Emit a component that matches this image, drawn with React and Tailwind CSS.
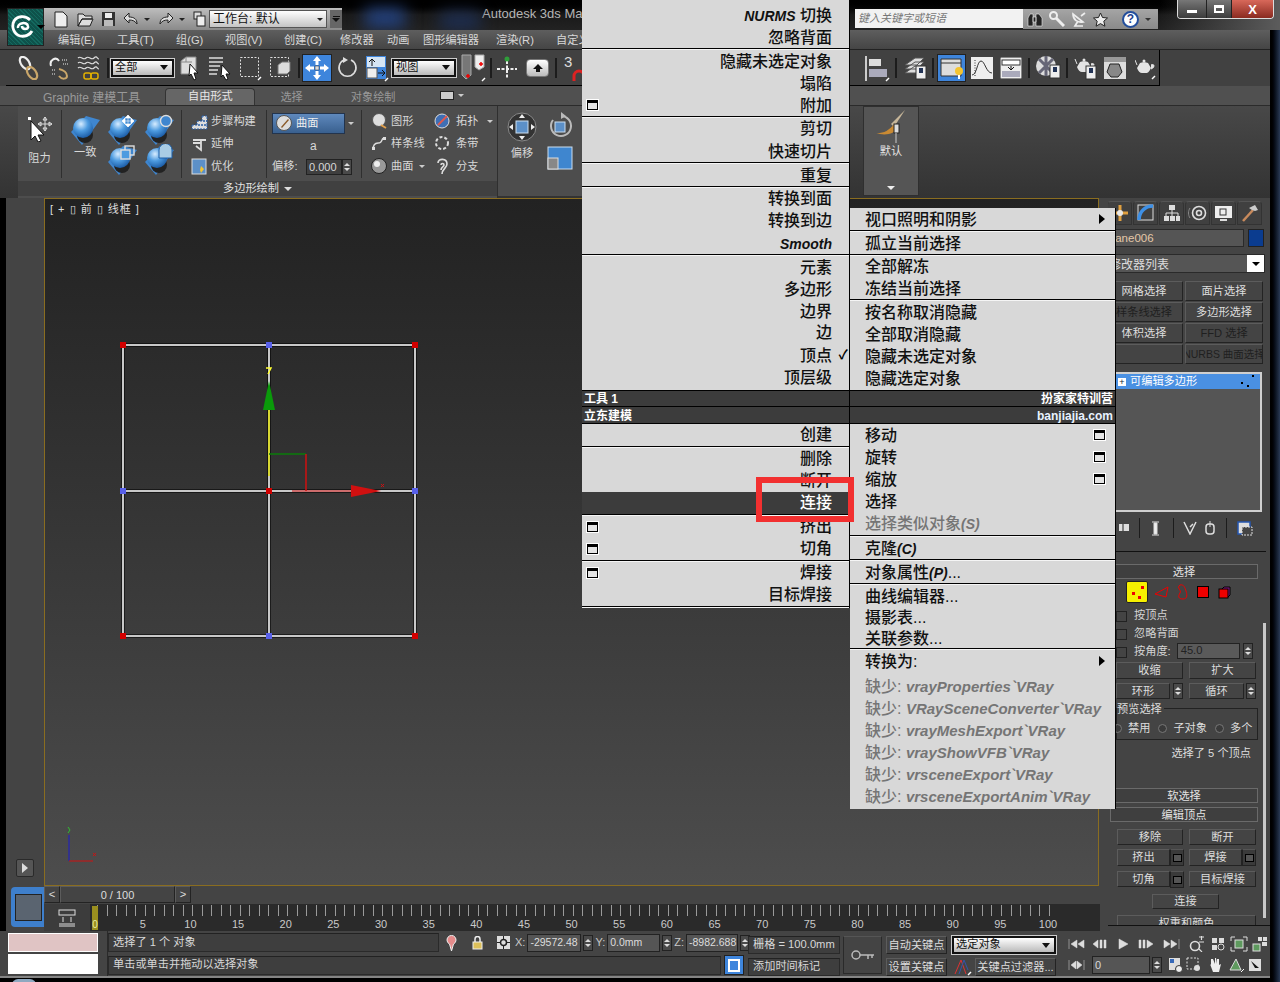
import React from "react";

const Svg = ({ w, h, className = "", children }) => (
  <svg width={w} height={h} viewBox={`0 0 ${w} ${h}`} className={`shrink-0 ${className}`} fill="none">
    {children}
  </svg>
);

/* ---------- toolbar icons ---------- */
const Chain = () => (
  <Svg w={21} h={24}>
    <ellipse cx="7" cy="7" rx="4" ry="7" transform="rotate(-35 7 7)" stroke="#eee" strokeWidth="2.2" />
    <ellipse cx="14" cy="17" rx="4" ry="7" transform="rotate(-35 14 17)" stroke="#c9a66a" strokeWidth="2.2" />
  </Svg>
);
const Unlink = () => (
  <Svg w={22} h={24}>
    <path d="M3 10C1 4 8 0 11 5" stroke="#eee" strokeWidth="2" />
    <path d="M11 13c5 1 8 4 8 7s-5 4-8 0" stroke="#c9a66a" strokeWidth="2" />
    <path d="M14 4h5M15 8h5M4 14h3M4 18h3" stroke="#999" strokeWidth="2" strokeDasharray="1 1" />
  </Svg>
);
const Waves = () => (
  <Svg w={23} h={26}>
    <path d="M1 3c3-3 5 3 8 0s5 3 8 0 3 1 5 1M1 8c3-3 5 3 8 0s5 3 8 0 3 1 5 1M1 13c3-3 5 3 8 0s5 3 8 0 3 1 5 1" stroke="#ddd" strokeWidth="1.2" />
    <rect x="7" y="18" width="7" height="6" rx="2" stroke="#e2b100" strokeWidth="1.5" />
    <rect x="14" y="18" width="7" height="6" rx="2" stroke="#e2b100" strokeWidth="1.5" />
  </Svg>
);
const SelectObj = () => (
  <Svg w={19} h={26}>
    <path d="M1 6l5-4h10v14l-4 3H1z" fill="#ddd" stroke="#888" />
    <path d="M6 2v5H1M6 7h6" stroke="#888" />
    <path d="M10 9l8 9-4 0 2 6-2 1-3-6-2 2z" fill="#fff" stroke="#111" />
  </Svg>
);
const SelectName = () => (
  <Svg w={23} h={26}>
    <path d="M1 3h14M1 7h14M1 11h11M1 15h9M1 19h8" stroke="#ddd" strokeWidth="1.3" />
    <path d="M14 10l8 9-4 0 2 5-2 1-3-5-2 2z" fill="#fff" stroke="#111" />
  </Svg>
);
const Rect = () => (
  <Svg w={23} h={26}>
    <rect x="1.5" y="2.5" width="18" height="19" stroke="#ddd" strokeDasharray="2 1.5" />
    <path d="M19 25l3-3" stroke="#fff" strokeWidth="1.5" />
  </Svg>
);
const WindowSel = () => (
  <Svg w={23} h={26}>
    <rect x="1.5" y="2.5" width="18" height="19" stroke="#ddd" strokeDasharray="2 1.5" />
    <path d="M9 10l4-3h8v9l-3 3H9z" fill="#ddd" stroke="#777" />
  </Svg>
);
const MoveBtn = () => (
  <div className="w-[30px] h-[28px] bg-[#3e85dc] border border-[#222] flex items-center justify-center">
    <Svg w={26} h={26}>
      <path d="M13 1l4 5h-2.500v4h-3V6H9zM13 25l4-5h-2.500v-4h-3v4H9zM1 13l5-4v2.500h4v3H6V17zM25 13l-5-4v2.500h-4v3h4V17z" fill="#fff" />
      <rect x="11" y="11" width="4" height="4" fill="#ddd" stroke="#234" strokeWidth=".5" />
    </Svg>
  </div>
);
const Rotate = () => (
  <Svg w={21} h={24}>
    <path d="M7 4a8.500 8.500 0 1 0 7 0" stroke="#ddd" strokeWidth="1.6" />
    <path d="M6 1l5 3-5 3z" fill="#ddd" />
  </Svg>
);
const Scale = () => (
  <Svg w={24} h={28}>
    <rect x="1" y="2" width="20" height="23" fill="#3e85dc" />
    <rect x="2" y="14" width="10" height="10" fill="#eee" stroke="#555" />
    <rect x="2" y="3" width="18" height="10" fill="#d5e5f5" />
    <path d="M7 12V5M4 8l3-3 3 3M13 19h7M17 16l3 3-3 3" stroke="#111" />
    <path d="M20 27l3-3" stroke="#fff" strokeWidth="1.5" />
  </Svg>
);
const Mirror = () => (
  <Svg w={25} h={28}>
    <path d="M1 1h9v20l-5 4-4-4z" fill="#777" stroke="#aaa" />
    <path d="M14 1h9v12l-5 3-4-3z" fill="#eee" stroke="#aaa" />
    <path d="M5 22h4M7 20v4M18 10h4M20 8v4" stroke="#e00" strokeWidth="1.5" />
    <path d="M21 27l3-3" stroke="#fff" strokeWidth="1.5" />
  </Svg>
);
const Pivot = () => (
  <Svg w={22} h={24}>
    <path d="M11 5v18M1 13h20" stroke="#eee" strokeWidth="2" strokeDasharray="3 1.500" />
    <circle cx="11" cy="3" r="2.500" fill="#2f9e3a" />
  </Svg>
);
const UpBtn = () => (
  <div className="w-[23px] h-[18px] rounded-sm bg-linear-to-b from-white to-[#bbb] border border-[#777] flex items-center justify-center">
    <Svg w={12} h={10}>
      <path d="M6 1l5 5H8v3H4V6H1z" fill="#111" />
    </Svg>
  </div>
);
const Snap = () => (
  <div className="w-[21px] h-[28px] relative text-[#ddd] text-[15px] leading-[16px]">
    3
    <Svg w={14} h={12} className="absolute left-[8px] top-[15px]">
      <path d="M2 12V7a5 5 0 0 1 10 0v5" stroke="#d22" strokeWidth="3" />
    </Svg>
  </div>
);
const Align = () => (
  <Svg w={25} h={28}>
    <path d="M1 2v25" stroke="#ccc" strokeWidth="2" />
    <rect x="4" y="5" width="12" height="7" fill="#ddd" />
    <rect x="4" y="15" width="18" height="8" fill="#aab" />
    <path d="M21 27l3-3" stroke="#fff" strokeWidth="1.5" />
  </Svg>
);
const Layers = () => (
  <Svg w={23} h={24}>
    <path d="M1 9l10-7h9l-7 7zM1 13l10-7h9l-7 7zM1 17l10-7h9l-7 7z" fill="#ddd" stroke="#555" />
    <rect x="12" y="10" width="10" height="13" fill="#eee" stroke="#333" />
    <rect x="15" y="12" width="4" height="5" fill="#235" />
  </Svg>
);
const SceneBtn = () => (
  <div className="w-[29px] h-[28px] bg-[#3e85dc] border border-[#222] flex items-center justify-center">
    <Svg w={25} h={24}>
      <path d="M2 3h20v17H2z" fill="#ddd" stroke="#333" />
      <path d="M2 7h20" stroke="#333" />
      <circle cx="20" cy="15" r="4" fill="#f4c430" />
      <path d="M20 19v4" stroke="#fff" strokeWidth="2" />
    </Svg>
  </div>
);
const CurveEd = () => (
  <Svg w={22} h={22}>
    <rect width="22" height="22" fill="#eee" />
    <path d="M1 18c5 0 5-14 9-14s5 12 11 12" stroke="#333" />
    <path d="M4 3v16" stroke="#333" strokeDasharray="1 1.500" />
  </Svg>
);
const Schema = () => (
  <Svg w={22} h={22}>
    <rect width="22" height="22" fill="#eee" stroke="#222" />
    <rect x="2" y="3" width="18" height="5" fill="#fff" stroke="#333" />
    <rect x="2" y="14" width="18" height="6" fill="#aab" />
    <path d="M11 9v4M8 10l3 3 3-3" stroke="#111" />
  </Svg>
);
const Material = () => (
  <Svg w={25} h={26}>
    <circle cx="10" cy="11" r="10" fill="#ddd" />
    <path d="M3 4l7 7-7 7M10 1v20M17 4l-7 7 7 7" stroke="#667" strokeWidth="3" />
    <rect x="14" y="10" width="10" height="13" fill="#eee" stroke="#333" />
    <rect x="17" y="12" width="4" height="5" fill="#235" />
  </Svg>
);
const Pot = ({ x = 0, y = 0 }) => (
  <g transform={`translate(${x} ${y})`} fill="#e4e4e4">
    <path d="M5 5c2-1 6-1 8 0l3 5c-2 4-3 5-5 5H7c-2 0-4-2-5-5z" />
    <path d="M2 7L0 2M16 7c4-2 4 3 0 4" stroke="#e4e4e4" />
    <circle cx="9" cy="3" r="1.500" />
  </g>
);
const Teapot1 = () => (
  <Svg w={23} h={24}>
    <Pot x={1} y={1} />
    <rect x="12" y="10" width="10" height="13" fill="#eee" stroke="#333" />
    <rect x="15" y="12" width="4" height="5" fill="#235" />
  </Svg>
);
const Teapot2 = () => (
  <div className="w-[22px] h-[22px] bg-[#ddd] border-t-[5px] border-[#999] flex items-center justify-center">
    <Svg w={18} h={15}>
      <path d="M4 1h9l3 8-4 5H5L1 9z" fill="#888" stroke="#222" />
    </Svg>
  </div>
);
const Teapot3 = () => (
  <Svg w={21} h={24}>
    <Pot x={0} y={2} />
    <path d="M17 23l3-3" stroke="#fff" strokeWidth="1.5" />
  </Svg>
);

/* ---------- ribbon icons ---------- */
const Ball = ({ over = null }) => (
  <Svg w={30} h={32}>
    <defs>
      <radialGradient id="bl" cx="40%" cy="30%" r="70%">
        <stop offset="0" stopColor="#d6ecff" />
        <stop offset=".5" stopColor="#4d9be0" />
        <stop offset="1" stopColor="#1d5ea8" />
      </radialGradient>
    </defs>
    <path d="M1 18L12 31l18-25-14-4z" fill="#3f86cf" />
    <circle cx="15" cy="21" r="8" fill="#222" />
    <circle cx="13" cy="14" r="10" fill="url(#bl)" />
    {over}
  </Svg>
);
const Mini = ({ children }) => (
  <Svg w={17} h={17}>
    {children}
  </Svg>
);

/* ---------- small widgets ---------- */
const Sep = ({ className = "" }) => <div className={`w-[2px] h-[20px] bg-[#1c1c1c] shrink-0 ${className}`} />;
const Spin = ({ className = "" }) => (
  <div className={`flex flex-col w-[10px] h-[16px] border border-[#222] bg-[#4a4a4a] items-center justify-center gap-[2px] shrink-0 ${className}`}>
    <span className="w-0 h-0 border-x-[3px] border-x-transparent border-b-[3px] border-b-[#ddd]" />
    <span className="w-0 h-0 border-x-[3px] border-x-transparent border-t-[3px] border-t-[#ddd]" />
  </div>
);
const Btn = ({ children, className = "", dim }) => (
  <div
    className={`flex items-center justify-center pt-[1px] bg-[#444] border border-[#232323] border-t-[#5c5c5c] border-l-[#5c5c5c] whitespace-nowrap overflow-hidden ${dim ? "text-[#1f1f1f]" : "text-[#ddd]"} ${className}`}
  >
    {children}
  </div>
);
const Rollout = ({ children, className = "" }) => (
  <div className={`h-[15px] pt-[2px] -ml-[6px] w-[148px] border border-[#6a6a6a] bg-[#3f3f3f] text-[#e4e4e4] flex items-center justify-center leading-none shrink-0 ${className}`}>
    {children}
  </div>
);
const BoxIcon = () => <span className="block w-[11px] h-[10px] border border-black border-t-[3px] bg-[#e4e4e4] outline outline-white shrink-0" />;
const Combo = ({ children, className = "" }) => (
  <div className={`h-[18px] border-2 border-[#111] outline outline-[#ccc] bg-linear-to-b from-white to-[#bbb] text-[#111] flex items-center justify-between pl-[2px] pr-[4px] shrink-0 ${className}`}>
    <span>{children}</span>
    <span className="w-0 h-0 border-x-[4px] border-x-transparent border-t-[5px] border-t-[#111]" />
  </div>
);

/* ---------- quad menus ---------- */
const MSep = () => <div className="h-[2px] border-t border-t-black border-b border-b-[#f5f5f5]" />;
const LItem = ({ children, box, dark, up }) => (
  <div className={`h-[22px] flex items-center pr-[17px] pl-[5px] whitespace-nowrap ${dark ? "bg-[#3c3c3c] text-white" : "text-[#111]"}`}>
    {box && <BoxIcon />}
    <span className={`ml-auto ${up ? "" : "pt-[2px]"}`}>{children}</span>
  </div>
);
const RItem = ({ children, box, arrow, dim, h = "h-[22px]" }) => (
  <div className={`${h} flex items-center pl-[15px] pr-[10px] whitespace-nowrap ${dim ? "text-[#757575]" : "text-[#111]"}`}>
    <span className="pt-[2px]">{children}</span>
    {box && <span className="ml-auto"><BoxIcon /></span>}
    {arrow && <span className="ml-auto w-0 h-0 border-y-[5px] border-y-transparent border-l-[6px] border-l-black" />}
  </div>
);
const Lat = ({ children }) => <span className="italic font-bold text-[14px]">{children}</span>;
const Miss = ({ children }) => <RItem dim>缺少: <span className="italic font-bold text-[15px]">{children}</span></RItem>;

const LeftMenu = () => (
  <div className="absolute left-[582px] top-0 w-[268px] border-r border-black bg-[#d8d8d8] text-[16px] font-medium leading-none flex flex-col">
    <div className="pt-[4px]">
      <LItem><Lat>NURMS</Lat> 切换</LItem>
      <LItem>忽略背面</LItem>
    </div>
    <MSep />
    <LItem>隐藏未选定对象</LItem>
    <LItem>塌陷</LItem>
    <LItem box>附加</LItem>
    <MSep />
    <LItem up>剪切</LItem>
    <LItem>快速切片</LItem>
    <MSep />
    <LItem>重复</LItem>
    <MSep />
    <LItem up>转换到面</LItem>
    <LItem up>转换到边</LItem>
    <LItem><Lat>Smooth</Lat></LItem>
    <MSep />
    <LItem>元素</LItem>
    <LItem>多边形</LItem>
    <LItem>边界</LItem>
    <LItem up>边</LItem>
    <div className="relative">
      <LItem>顶点</LItem>
      <span className="absolute right-[1px] top-[4px] text-[13px] font-bold text-black">✓</span>
    </div>
    <LItem>顶层级</LItem>
    <div className="h-[2px]" />
    <div className="bg-[#3c3c3c] text-[12px] font-bold text-white border-y border-black">
      <div className="h-[16px] pl-[2px] pt-[1px] flex items-center border-b border-black">工具 1</div>
      <div className="h-[16px] pl-[2px] pt-[1px] flex items-center">立东建模</div>
    </div>
    <LItem up>创建</LItem>
    <MSep />
    <LItem up>删除</LItem>
    <LItem up>断开</LItem>
    <LItem dark up>连接</LItem>
    <MSep />
    <LItem box up>挤出</LItem>
    <LItem box up>切角</LItem>
    <MSep />
    <LItem box up>焊接</LItem>
    <LItem up>目标焊接</LItem>
    <MSep />
  </div>
);

const RightMenu = () => (
  <div className="absolute left-[850px] top-[208px] w-[266px] bg-[#d8d8d8] text-[16px] font-medium leading-none flex flex-col border-r border-black">
    <RItem arrow>视口照明和阴影</RItem>
    <MSep />
    <RItem>孤立当前选择</RItem>
    <MSep />
    <div className="-mt-[1px]" />
    <RItem>全部解冻</RItem>
    <RItem>冻结当前选择</RItem>
    <MSep />
    <RItem>按名称取消隐藏</RItem>
    <RItem>全部取消隐藏</RItem>
    <RItem>隐藏未选定对象</RItem>
    <RItem>隐藏选定对象</RItem>
    <div className="h-[1px]" />
    <div className="bg-[#3c3c3c] text-[12px] font-bold text-white border-y border-black text-right">
      <div className="h-[16px] pr-[2px] pt-[1px] flex items-center justify-end border-b border-black">扮家家特训营</div>
      <div className="h-[16px] pr-[2px] pt-[1px] flex items-center justify-end text-[#e8f2ff]">banjiajia.com</div>
    </div>
    <RItem box>移动</RItem>
    <RItem box>旋转</RItem>
    <RItem box>缩放</RItem>
    <RItem>选择</RItem>
    <RItem dim>选择类似对象<Lat>(S)</Lat></RItem>
    <div className="h-[1px]" />
    <MSep />
    <RItem>克隆<Lat>(C)</Lat></RItem>
    <MSep />
    <RItem>对象属性<Lat>(P)</Lat>...</RItem>
    <MSep />
    <RItem h="h-[21px]">曲线编辑器...</RItem>
    <RItem h="h-[21px]">摄影表...</RItem>
    <RItem h="h-[21px]">关联参数...</RItem>
    <MSep />
    <RItem arrow>转换为:</RItem>
    <div className="h-[3px]" />
    <Miss>vrayProperties`VRay</Miss>
    <Miss>VRaySceneConverter`VRay</Miss>
    <Miss>vrayMeshExport`VRay</Miss>
    <Miss>vrayShowVFB`VRay</Miss>
    <Miss>vrsceneExport`VRay</Miss>
    <Miss>vrsceneExportAnim`VRay</Miss>
    <div className="h-[2px]" />
  </div>
);

/* ---------- top of window ---------- */
const TitleBar = () => (
  <div className="h-[30px] relative bg-linear-to-b from-black via-[#1a1a1a] to-[#222] flex items-start overflow-hidden">
    <div className="absolute left-[365px] top-[8px] w-[40px] h-[20px] bg-[#23417e] blur-sm" />
    <div className="absolute left-[440px] top-[12px] w-[40px] h-[18px] bg-[#1d2e52] blur-sm" />
    <div className="absolute left-[1160px] top-0 w-[120px] h-[30px] bg-linear-to-r from-transparent to-[#5c5c5c]" />
    {/* quick access */}
    <div className="ml-[44px] mt-[8px] h-[22px] w-[298px] flex items-center bg-linear-to-b from-[#bdbdbd] to-[#8a8a8a] relative">
      <Svg w={16} h={17} className="ml-[9px]"><path d="M2 1h8l4 4v11H2z" fill="#eee" stroke="#222" /></Svg>
      <Svg w={17} h={15} className="ml-[8px]"><path d="M1 2h5l2 2h7v3H5L1 14zM5 7h11l-3 7H1z" fill="#ddd" stroke="#222" /></Svg>
      <Svg w={15} h={16} className="ml-[7px]"><rect x="1" y="1" width="13" height="14" fill="#333" /><rect x="4" y="2" width="7" height="5" fill="#eee" /><rect x="3" y="9" width="9" height="6" fill="#bbb" /></Svg>
      <Svg w={16} h={14} className="ml-[7px]"><path d="M6 1L1 6l5 5V8c4 0 6 1 8 4 0-5-3-7-8-7z" fill="#ddd" stroke="#222" /></Svg>
      <span className="ml-[5px] w-0 h-0 border-x-[3px] border-x-transparent border-t-[3px] border-t-[#222]" />
      <Svg w={16} h={14} className="ml-[8px]"><path d="M10 1l5 5-5 5V8c-4 0-6 1-8 4 0-5 3-7 8-7z" fill="#ddd" stroke="#222" /></Svg>
      <span className="ml-[5px] w-0 h-0 border-x-[3px] border-x-transparent border-t-[3px] border-t-[#222]" />
      <Svg w={13} h={16} className="ml-[8px]"><rect x="1" y="1" width="7" height="7" fill="#ddd" stroke="#222" /><rect x="4" y="5" width="8" height="10" fill="#eee" stroke="#222" /></Svg>
      <div className="ml-[3px] w-[118px] h-[18px] bg-linear-to-b from-white to-[#c4c4c4] border border-[#555] flex items-center justify-between px-[3px] text-[12px] text-[#111]">
        工作台: 默认
        <span className="w-0 h-0 border-x-[3px] border-x-transparent border-t-[3px] border-t-[#222]" />
      </div>
      <div className="ml-[3px] w-[12px] h-[18px] flex flex-col items-center justify-center gap-[1px] bg-[#666]">
        <span className="w-[7px] h-[1px] bg-[#111]" />
        <span className="w-0 h-0 border-x-[4px] border-x-transparent border-t-[4px] border-t-[#111]" />
      </div>
    </div>
    <span className="ml-[140px] mt-[7px] text-[13px] text-[#b5b5b5] whitespace-nowrap">Autodesk 3ds Max</span>
    {/* search box */}
    <div className="absolute left-[855px] top-[9px] w-[168px] h-[19px] bg-[#f2f2f2] pl-[3px] flex items-center text-[11px] italic text-[#777]">键入关键字或短语</div>
    <div className="absolute left-[1023px] top-[9px] w-[135px] h-[20px] bg-linear-to-b from-[#a5a5a5] to-[#8a8a8a] flex items-center">
      <Svg w={16} h={15} className="ml-[4px]"><path d="M1 14V6l2-4h3v12zM9 14V2h3l3 4v8zM6 5h3v5H6z" fill="#222" stroke="#eee" strokeWidth=".6" /></Svg>
      <Svg w={16} h={16} className="ml-[6px]"><circle cx="4.500" cy="4.500" r="3.500" stroke="#eee" strokeWidth="2" /><path d="M7 7l8 8" stroke="#eee" strokeWidth="3" /></Svg>
      <Svg w={16} h={16} className="ml-[6px]"><path d="M2 3c0 6 5 9 10 8zM7 10l-3 5h8M10 5l4-3" stroke="#eee" strokeWidth="1.700" /></Svg>
      <Svg w={15} h={15} className="ml-[6px]"><path d="M7.500 1l2 4.500 5 .5-3.700 3.200 1.100 5-4.400-2.600-4.400 2.600 1.100-5L.5 6l5-.5z" fill="#eee" stroke="#222" /></Svg>
      <div className="ml-[14px] w-[17px] h-[17px] rounded-full bg-white border-2 border-[#234e9c] text-[#1d3f8f] text-[12px] font-bold flex items-center justify-center leading-none">?</div>
      <span className="ml-[6px] w-0 h-0 border-x-[3px] border-x-transparent border-t-[3px] border-t-[#333]" />
    </div>
    {/* window controls */}
    <div className="absolute left-[1177px] top-0 w-[97px] h-[19px] border border-t-0 border-[#ddd] rounded-b-[4px] flex overflow-hidden">
      <div className="w-[29px] bg-linear-to-b from-[#777] to-[#3c3c3c] flex items-center justify-center border-r border-[#222]"><span className="w-[10px] h-[3px] bg-white mt-[5px]" /></div>
      <div className="w-[25px] bg-linear-to-b from-[#777] to-[#3c3c3c] flex items-center justify-center border-r border-[#222]"><span className="w-[10px] h-[8px] border-2 border-white border-t-[3px]" /></div>
      <div className="flex-1 bg-linear-to-b from-[#d8685a] to-[#8a2a20] text-white text-[13px] font-bold flex items-center justify-center leading-none">X</div>
    </div>
  </div>
);

const MENU = [
  ["编辑(E)", "w-[59px]"],
  ["工具(T)", "w-[59px]"],
  ["组(G)", "w-[49px]"],
  ["视图(V)", "w-[59px]"],
  ["创建(C)", "w-[56px]"],
  ["修改器", "w-[47px]"],
  ["动画", "w-[36px]"],
  ["图形编辑器", "w-[73px]"],
  ["渲染(R)", "w-[60px]"],
  ["自定义(U)", "w-[60px]"],
];

const MenuBar = () => (
  <div className="h-[20px] w-[1270px] pl-[58px] pt-[2px] flex items-center bg-linear-to-b from-[#5e5e5e] to-[#454545] text-[#d8d8d8] whitespace-nowrap overflow-hidden border-b border-[#222]">
    {MENU.map(([t, c]) => (
      <span key={t} className={`${c} shrink-0`}>{t}</span>
    ))}
  </div>
);

const MainToolbar = () => (
  <div className="h-[36px] w-[1270px] bg-[#414141] flex items-center">
    <div className="ml-[6px] w-[1154px] h-[36px] flex items-center border-r border-b border-black">
      <div className="ml-[12px]"><Chain /></div>
      <div className="ml-[9px]"><Unlink /></div>
      <div className="ml-[7px]"><Waves /></div>
      <Sep className="ml-[7px]" />
      <Combo className="ml-[2px] w-[63px]">全部</Combo>
      <div className="ml-[6px]"><SelectObj /></div>
      <div className="ml-[9px]"><SelectName /></div>
      <div className="ml-[8px]"><Rect /></div>
      <div className="ml-[7px]"><WindowSel /></div>
      <Sep className="ml-[6px]" />
      <div className="ml-[2px]"><MoveBtn /></div>
      <div className="ml-[5px]"><Rotate /></div>
      <div className="ml-[7px]"><Scale /></div>
      <Combo className="ml-[3px] w-[64px]">视图</Combo>
      <div className="ml-[5px]"><Mirror /></div>
      <Sep className="ml-[4px]" />
      <div className="ml-[4px]"><Pivot /></div>
      <div className="ml-[8px]"><UpBtn /></div>
      <Sep className="ml-[6px]" />
      <div className="ml-[7px]"><Snap /></div>
      <div className="ml-[280px]"><Align /></div>
      <Sep className="ml-[5px]" />
      <div className="ml-[7px]"><Layers /></div>
      <Sep className="ml-[5px]" />
      <div className="ml-[3px]"><SceneBtn /></div>
      <div className="ml-[5px]"><CurveEd /></div>
      <div className="ml-[7px]"><Schema /></div>
      <Sep className="ml-[6px]" />
      <div className="ml-[6px]"><Material /></div>
      <Sep className="ml-[5px]" />
      <div className="ml-[6px]"><Teapot1 /></div>
      <div className="ml-[7px]"><Teapot2 /></div>
      <div className="ml-[9px]"><Teapot3 /></div>
    </div>
  </div>
);

const RibbonTabs = () => (
  <div className="h-[20px] w-[1270px] bg-[#505050] flex items-end text-[#999] border-b border-[#2b2b2b] whitespace-nowrap">
    <div className="ml-[16px] h-[19px] flex items-center">
      <span className="ml-[27px] pt-[4px] text-[12px]">Graphite 建模工具</span>
      <div className="ml-[25px] w-[90px] h-[17px] mt-[2px] bg-[#666] border border-b-0 border-[#333] rounded-t-sm text-[#e8e8e8] flex items-center justify-center">自由形式</div>
      <span className="ml-[25px] pt-[4px]">选择</span>
      <span className="ml-[48px] pt-[4px]">对象绘制</span>
      <span className="ml-[44px] w-[14px] h-[9px] bg-[#ccc] border border-[#222]" />
      <span className="ml-[4px] w-0 h-0 border-x-[3px] border-x-transparent border-t-[3px] border-t-[#ccc]" />
    </div>
  </div>
);

const RTool = ({ icon, children, className = "" }) => (
  <div className={`h-[22.500px] flex items-center text-[#d8d8d8] whitespace-nowrap ${className}`}>
    {icon}
    <span className="ml-[3px]">{children}</span>
  </div>
);

const Ribbon = () => (
  <div className="h-[92px] w-[1270px] bg-linear-to-b from-[#484848] to-[#333] flex">
    <div className="ml-[18px] w-[480px] flex flex-col bg-[#4d4d4d] border-r border-[#2f2f2f]">
      <div className="h-[75px] flex text-[#d8d8d8]">
        {/* drag */}
        <div className="w-[43px] flex flex-col items-center pt-[10px]">
          <Svg w={26} h={26}>
            <path d="M4 5l13 14-6 0 3 6-3 1-3-6-4 4z" fill="#fff" stroke="#111" />
            <rect x="1" y="1" width="3" height="3" fill="#fff" />
            <path d="M18 1v14M11 8h14M18 1l-2 3h4zM18 15l-2-3h4zM11 8l3-2v4zM25 8l-3-2v4z" stroke="#ddd" />
          </Svg>
          <span className="mt-[11px]">阻力</span>
        </div>
        <div className="w-px h-[68px] bg-[#2f2f2f] mt-[4px]" />
        {/* conform group */}
        <div className="w-[119px] flex pl-[8px] pt-[8px]">
          <div className="w-[38px] flex flex-col items-start">
            <Ball />
            <span className="mt-[1px] ml-[4px]">一致</span>
          </div>
          <div className="grid grid-cols-[37px_37px] auto-rows-[30px]">
            <Ball over={<path d="M21 1v12M15 7h12M21 1l-3 3h6zM21 13l-3-3h6zM15 7l3-3v6zM27 7l-3-3v6z" stroke="#fff" fill="#fff" strokeWidth=".6" />} />
            <Ball over={<circle cx="22" cy="7" r="5.500" fill="#3f86cf" stroke="#ddd" strokeWidth="1.400" />} />
            <Ball over={<><rect x="18" y="2" width="9" height="9" stroke="#ddd" strokeWidth="1.400" /><rect x="14" y="6" width="9" height="9" fill="#4d9be0" stroke="#ddd" strokeWidth="1.400" /></>} />
            <Ball over={<path d="M15 14V6a6 6 0 0 1 13 0v8z" fill="#a9cce4" stroke="#1d5ea8" />} />
          </div>
        </div>
        <div className="w-px h-[68px] bg-[#2f2f2f] mt-[4px]" />
        {/* step build */}
        <div className="w-[84px] flex flex-col pl-[9px] pt-[4px]">
          <RTool icon={<Mini><path d="M1 12h15v4H1zM6 8h10v4H6zM11 3h5v5h-5z" fill="#ddd" stroke="#2a5fa6" strokeDasharray="2 1" /></Mini>}>步骤构建</RTool>
          <RTool icon={<Mini><path d="M2 5h13M10 5v10l-5-4M2 8h8" stroke="#ddd" strokeWidth="1.800" /></Mini>}>延伸</RTool>
          <RTool icon={<Mini><rect x="1" y="1" width="14" height="15" fill="#5c90c8" stroke="#ddd" /><path d="M10 8l3 3-3 4-1-3z" fill="#f4c430" /></Mini>}>优化</RTool>
        </div>
        <div className="w-px h-[68px] bg-[#2f2f2f] mt-[4px]" />
        {/* surface */}
        <div className="w-[94px] flex flex-col pl-[5px] pt-[7px]">
          <div className="flex items-center">
            <div className="w-[73px] h-[21px] bg-linear-to-b from-[#5f89bd] to-[#39608f] border border-[#23344d] flex items-center text-[#eee]">
              <Svg w={17} h={17} className="ml-[3px]"><circle cx="8" cy="8" r="7.500" fill="#ddd" stroke="#555" /><path d="M5 12L12 4l1 1-7 8z" fill="#8a5a2a" /></Svg>
              <span className="ml-[3px]">曲面</span>
            </div>
            <span className="ml-[3px] w-0 h-0 border-x-[3px] border-x-transparent border-t-[3px] border-t-[#ccc]" />
          </div>
          <span className="mt-[3px] ml-[38px] text-[12px] leading-[18px]">a</span>
          <div className="mt-[4px] flex items-center h-[16px] whitespace-nowrap">
            <span className="w-[34px] shrink-0">偏移:</span>
            <div className="w-[36px] h-[16px] bg-[#3f3f3f] border border-[#222] text-[11px] flex items-center pl-[2px]">0.000</div>
            <Spin />
          </div>
        </div>
        <div className="w-px h-[68px] bg-[#2f2f2f] mt-[4px]" />
        {/* shapes */}
        <div className="w-[72px] flex flex-col pl-[9px] pt-[4px]">
          <RTool icon={<Mini><circle cx="8" cy="7" r="6.500" fill="#ddd" stroke="#555" /><path d="M10 12l5 3" stroke="#e2a04d" strokeWidth="2" /></Mini>}>图形</RTool>
          <RTool icon={<Mini><path d="M2 15c0-5 2-7 5-7s3-1 5-5" stroke="#ddd" strokeWidth="1.500" /><rect x="1" y="12" width="3" height="3" fill="#ddd" /><rect x="12" y="2" width="3" height="3" fill="#ddd" /></Mini>}>样条线</RTool>
          <RTool icon={<Mini><circle cx="8" cy="8" r="7.500" fill="#999" stroke="#222" /><circle cx="6" cy="6" r="3" fill="#eee" /></Mini>}>曲面 <span className="ml-[3px] inline-block w-0 h-0 align-middle border-x-[3px] border-x-transparent border-t-[3px] border-t-[#ccc]" /></RTool>
        </div>
        {/* topology */}
        <div className="flex-1 flex flex-col pt-[4px]">
          <RTool icon={<Mini><circle cx="8" cy="8" r="7" fill="#3f6fb5" stroke="#ddd" /><path d="M4 12L13 3" stroke="#e0584d" strokeWidth="2" /></Mini>} className="gap-[2px]">拓扑 <span className="ml-[6px] inline-block w-0 h-0 align-middle border-x-[3px] border-x-transparent border-t-[3px] border-t-[#ccc]" /></RTool>
          <RTool icon={<Mini><circle cx="8" cy="8" r="6" stroke="#ddd" strokeWidth="2" strokeDasharray="3 2" /></Mini>} className="gap-[2px]">条带</RTool>
          <RTool icon={<Mini><path d="M4 5c0-5 9-5 9 1 0 4-5 5-5 10M7 7c0-2 3-2 3 0s-3 2-3 5" stroke="#ddd" strokeWidth="1.600" /></Mini>} className="gap-[2px]">分支</RTool>
        </div>
      </div>
      <div className="h-[15px] bg-[#404040] text-[#e0e0e0] flex items-center justify-center gap-[5px]">
        多边形绘制
        <span className="w-0 h-0 border-x-[4px] border-x-transparent border-t-[4px] border-t-[#ddd]" />
      </div>
    </div>
    <div className="w-[90px] flex flex-col items-start pl-[9px] pt-[6px] text-[#d8d8d8] bg-[#4d4d4d] h-[90px]">
      <div className="flex items-start gap-[10px]">
        <div className="flex flex-col items-center">
          <Svg w={30} h={30}>
            <circle cx="15" cy="15" r="14" fill="#333" stroke="#888" />
            <rect x="9" y="9" width="12" height="12" fill="#5c90c8" stroke="#cde" />
            <path d="M15 2l3 4h-6zM15 28l3-4h-6zM2 15l4 3v-6zM28 15l-4 3v-6z" fill="#eee" />
          </Svg>
          <span className="mt-[6px]">偏移</span>
        </div>
        <div className="flex flex-col gap-[4px]">
          <Svg w={26} h={30}>
            <path d="M6 8a10 10 0 1 0 8-4" stroke="#bbb" strokeWidth="2" />
            <path d="M14 0l5 4-5 3z" fill="#bbb" />
            <rect x="8" y="10" width="10" height="10" fill="#5c90c8" stroke="#cde" />
          </Svg>
          <Svg w={26} h={24}>
            <rect x="1" y="1" width="24" height="22" fill="#3f86cf" stroke="#cde" />
            <rect x="1" y="12" width="10" height="11" fill="#888" stroke="#ddd" />
          </Svg>
        </div>
      </div>
    </div>
    {/* default panel */}
    <div className="ml-[275px] w-[56px] h-[90px] bg-[#555] border border-[#2f2f2f] flex flex-col items-center pt-[2px] text-[#e4e4e4]">
      <Svg w={34} h={34}>
        <path d="M31 1L17 15l3 3z" fill="#c8b79a" />
        <path d="M1 24c7 1 14-2 19-9l4 4c-4 6-12 8-23 5z" fill="#c98a33" />
        <rect x="20" y="15" width="5" height="9" fill="#ddd" stroke="#222" />
        <path d="M22 24v10" stroke="#ccc" />
      </Svg>
      <span className="mt-[3px]">默认</span>
      <span className="mt-auto mb-[5px] w-0 h-0 border-x-[4px] border-x-transparent border-t-[4px] border-t-[#eee]" />
    </div>
  </div>
);

/* ---------- viewport ---------- */
const V = ({ x, y, c }) => <rect x={x - 3} y={y - 3} width="6" height="6" fill={c} />;

const Mesh = () => (
  <svg width="1052" height="686" className="absolute left-0 top-0" fill="none">
    {/* coords are viewport-relative: x-45, y-199 */}
    <g stroke="#000" strokeWidth="3.500" opacity=".7">
      <path d="M78 146h292v291H78zM224 146v291M78 292h292" />
    </g>
    <g stroke="#c8c8c8" strokeWidth="2">
      <path d="M78 146h292v291H78zM224 146v291M78 292h292" />
    </g>
    <path d="M224 210v67" stroke="#dcdc00" strokeWidth="1.500" />
    <path d="M224 255h37" stroke="#0a7d0a" strokeWidth="1.500" />
    <path d="M261 255v37" stroke="#d01010" strokeWidth="1.500" />
    <path d="M247 292h60" stroke="#d01010" strokeWidth="1" />
    <path d="M224 182l-6 29h12z" fill="#0a9a0a" />
    <path d="M336 292l-30-6v12z" fill="#d01010" />
    <path d="M221 169h5l-3 6" stroke="#ffff30" strokeWidth="1.500" />
    <path d="M336 285l3 3m0-3l-3 3" stroke="#d01010" />
    <V x={78} y={146} c="#d20000" />
    <V x={224} y={146} c="#5860ea" />
    <V x={370} y={146} c="#d20000" />
    <V x={78} y={292} c="#5860ea" />
    <V x={224} y={292} c="#d20000" />
    <V x={370} y={292} c="#5860ea" />
    <V x={78} y={437} c="#d20000" />
    <V x={224} y={437} c="#5860ea" />
    <V x={370} y={437} c="#d20000" />
    {/* world axis */}
    <path d="M24 636v26" stroke="#1a1acc" />
    <path d="M24 662h24" stroke="#d01010" />
    <path d="M23 628l2 3-2 3" stroke="#2fbf2f" />
    <path d="M48 654l3 3m0-3l-3 3" stroke="#d01010" />
  </svg>
);

const Ruler = () => (
  <div className="flex-1 h-[27px] bg-[#2a2a2a] flex flex-col overflow-hidden relative">
    <div className="absolute left-[2px] top-[2px] w-[6px] h-[24px] bg-[#9a8f1f] text-[#e8e8a0] text-[10px] leading-[38px] text-center">0</div>
    <div className="flex pl-[7px] h-[13px]">
      {Array.from({ length: 101 }, (_, i) => (
        <span key={i} className="block w-[9.530px] h-[11px] mt-[1px] border-l border-[#9a9a9a] shrink-0" />
      ))}
    </div>
    <div className="flex pl-[29px] text-[#c9c9c9] text-[11px] leading-[12px] mt-[1px]">
      {Array.from({ length: 20 }, (_, i) => (
        <span key={i} className="block w-[47.650px] shrink-0 text-center">{(i + 1) * 5}</span>
      ))}
    </div>
  </div>
);

/* ---------- command panel ---------- */
const PanelTab = ({ children }) => (
  <div className="w-[25px] h-[24px] bg-[#404040] border border-[#333] border-t-[#555] rounded-t-sm mr-[1px] flex items-center justify-center shrink-0">{children}</div>
);
const Chk = ({ children, className = "" }) => (
  <div className={`h-[18px] flex items-center ${className}`}>
    <span className="w-[11px] h-[11px] bg-[#444] border border-[#222] shrink-0" />
    <span className="ml-[7px]">{children}</span>
  </div>
);
const Radio = ({ children, className = "" }) => (
  <div className={`flex items-center whitespace-nowrap ${className}`}>
    <span className="w-[9px] h-[9px] rounded-full bg-[#3a3a3a] border border-[#777] shrink-0" />
    <span className="ml-[6px]">{children}</span>
  </div>
);
const WinBox = () => (
  <div className="w-[14px] h-[17px] bg-[#3a3a3a] border border-[#222] border-t-[#555] flex items-center justify-center shrink-0">
    <span className="w-[9px] h-[8px] bg-[#555] border border-black" />
  </div>
);

const CommandPanel = () => (
  <div className="w-[162px] h-[733px] bg-[#444] pl-[8px] relative overflow-hidden text-[#ddd] shrink-0 flex flex-col">
    <div className="mt-[3px] -ml-[9px] h-[26px] flex">
      <PanelTab>
        <Svg w={18} h={18}><path d="M9 1v16M1 9h16" stroke="#e0a040" strokeWidth="3" /><circle cx="9" cy="9" r="3" fill="#e8e8e8" /></Svg>
      </PanelTab>
      <PanelTab>
        <Svg w={20} h={20}><rect x="2" y="2" width="15" height="15" stroke="#ddd" /><path d="M3 17c0-8 6-14 14-14" stroke="#3e90e6" strokeWidth="3.500" /></Svg>
      </PanelTab>
      <PanelTab>
        <Svg w={18} h={18}><rect x="6" y="1" width="6" height="5" fill="#ddd" /><rect x="1" y="12" width="5" height="5" fill="#ddd" /><rect x="7" y="12" width="5" height="5" fill="#ddd" /><rect x="13" y="12" width="4" height="5" fill="#ddd" /><path d="M9 6v3M3 12V9h12v3M9 9v3" stroke="#ddd" /></Svg>
      </PanelTab>
      <PanelTab>
        <Svg w={20} h={16}><circle cx="11" cy="8" r="6.500" stroke="#ddd" strokeWidth="1.600" /><circle cx="11" cy="8" r="2.500" stroke="#ddd" strokeWidth="1.600" /><path d="M2 3c-2 3-2 7 0 10" stroke="#888" /></Svg>
      </PanelTab>
      <PanelTab>
        <Svg w={19} h={16}><rect x="1" y="1" width="17" height="12" fill="#eee" /><rect x="6" y="4" width="6" height="6" stroke="#333" /><path d="M6 15h7" stroke="#ddd" strokeWidth="2" /></Svg>
      </PanelTab>
      <PanelTab>
        <Svg w={18} h={18}><path d="M2 17L12 6" stroke="#c88a5c" strokeWidth="2.500" /><path d="M8 4l6-3 3 5-3 1-3-1z" fill="#ccc" /></Svg>
      </PanelTab>
    </div>
    <div className="mt-[3px] h-[18px] flex -ml-[15px]">
      <div className="w-[143px] h-[18px] bg-[#555] border border-[#2a2a2a] pl-[3px] text-[#e4c8a8] text-[11.500px] flex items-center">Plane006</div>
      <div className="ml-[4px] w-[16px] h-[18px] bg-[#0b3c8f] border border-[#222]" />
    </div>
    <div className="mt-[7px] h-[19px] w-[157px] -ml-[8px] flex bg-[#555] border border-[#2a2a2a]">
      <span className="pt-[2px] flex-1 self-center text-[12px]">修改器列表</span>
      <div className="w-[17px] bg-white flex items-center justify-center">
        <span className="w-0 h-0 border-x-[4px] border-x-transparent border-t-[4px] border-t-black" />
      </div>
    </div>
    <div className="mt-[8px] -ml-[11px] grid grid-cols-[78px_78px] gap-x-[2px] gap-y-[1px]">
      <Btn className="h-[20px]">网格选择</Btn>
      <Btn className="h-[20px]">面片选择</Btn>
      <Btn className="h-[20px]" dim>样条线选择</Btn>
      <Btn className="h-[20px]">多边形选择</Btn>
      <Btn className="h-[20px]">体积选择</Btn>
      <Btn className="h-[20px]" dim>FFD 选择</Btn>
      <Btn className="h-[20px]" />
      <Btn className="h-[20px] text-[10.500px]" dim>NURBS 曲面选择</Btn>
    </div>
    <div className="mt-[8px] w-[146px] h-[140px] border-2 border-[#cfcfcf] border-l-0 bg-[#555] shrink-0">
      <div className="h-[15px] bg-[#4a90e2] text-white flex items-center pl-[2px] relative">
        <span className="w-[8px] h-[8px] bg-white text-[#123] text-[9px] leading-[8px] text-center mr-[4px]">+</span>
        可编辑多边形
        <span className="absolute right-[6px] top-[1px] w-[2px] h-[2px] bg-black" />
        <span className="absolute right-[17px] top-[8px] w-[2px] h-[2px] bg-black" />
        <span className="absolute right-[11px] top-[11px] w-[2px] h-[2px] bg-black" />
      </div>
    </div>
    <div className="mt-[8px] h-[16px] flex items-center pl-[2px]">
      <Svg w={12} h={10}><rect x="1" y="1" width="10" height="7" fill="#ddd" /><path d="M5 1v7" stroke="#222" /></Svg>
      <Sep className="ml-[9px] !w-[1px]" />
      <Svg w={10} h={15} className="ml-[11px]"><path d="M1 1h7M1 14h7M3 2h3v11H3z" fill="#eee" stroke="#ddd" /></Svg>
      <Sep className="ml-[12px] !w-[1px]" />
      <Svg w={15} h={14} className="ml-[9px]"><path d="M1 1l6 12 6-12M7 6l3-3" stroke="#ddd" strokeWidth="1.500" /></Svg>
      <Svg w={12} h={15} className="ml-[6px]"><rect x="2" y="3" width="8" height="10" rx="3" stroke="#ddd" strokeWidth="1.500" /><path d="M6 0v6" stroke="#ddd" /></Svg>
      <Sep className="ml-[10px] !w-[1px]" />
      <Svg w={16} h={15} className="ml-[10px]"><rect x="1" y="1" width="12" height="12" fill="#ddd" stroke="#2456b0" strokeWidth="1.500" /><rect x="5" y="6" width="10" height="8" fill="#444" stroke="#ddd" strokeDasharray="2 1" /></Svg>
    </div>
    <div className="mt-[15px] h-[1px] w-[150px] bg-[#111] shrink-0" />
    <Rollout className="mt-[12px]">选择</Rollout>
    <div className="mt-[2px] h-[22px] flex items-center pl-[10px] shrink-0">
      <div className="w-[22px] h-[22px] bg-[#f6f000] border border-[#222] rounded-[2px] relative">
        <span className="absolute left-[5px] top-[10px] w-[3px] h-[3px] bg-[#e00]" />
        <span className="absolute left-[14px] top-[4px] w-[3px] h-[3px] bg-[#e00]" />
        <span className="absolute left-[11px] top-[14px] w-[3px] h-[3px] bg-[#e00]" />
      </div>
      <Svg w={15} h={14} className="ml-[6px]"><path d="M14 2L1 9l11 3z" stroke="#e00" /></Svg>
      <Svg w={12} h={17} className="ml-[7px]"><path d="M4 1c-4 3 2 5 0 8s-2 6 3 6 4-5 3-8-2-7-6-6z" stroke="#e00" /></Svg>
      <span className="ml-[9px] w-[12px] h-[12px] bg-[#e00] border border-black" />
      <Svg w={13} h={13} className="ml-[9px]"><path d="M4 3l2-2h6v8l-2 2z" fill="#8a1a8a" stroke="#000" /><rect x="1" y="3" width="9" height="9" fill="#e00" stroke="#000" /></Svg>
    </div>
    <div className="mt-[4px] text-[#d4d4d4] shrink-0">
      <Chk>按顶点</Chk>
      <Chk>忽略背面</Chk>
      <div className="flex">
        <Chk>按角度:</Chk>
        <div className="ml-[6px] w-[63px] h-[16px] bg-[#5a5a5a] border border-[#222] text-[#222] pl-[3px] flex items-center">45.0</div>
        <Spin className="ml-[3px]" />
      </div>
    </div>
    <div className="mt-[1px] flex gap-[6px] shrink-0">
      <Btn className="w-[67px] h-[17px]">收缩</Btn>
      <Btn className="w-[67px] h-[17px]">扩大</Btn>
    </div>
    <div className="mt-[4px] flex shrink-0">
      <Btn className="w-[54px] h-[16px]">环形</Btn>
      <Spin className="ml-[3px]" />
      <Btn className="w-[55px] h-[16px] ml-[6px]">循环</Btn>
      <Spin className="ml-[2px]" />
    </div>
    <div className="mt-[9px] w-[142px] h-[32px] border border-[#222] relative shrink-0 flex items-end pb-[5px]">
      <span className="absolute left-0 -top-[7px] bg-[#444] pr-[2px] leading-[14px]">预览选择</span>
      <Radio className="-ml-[4px]">禁用</Radio>
      <Radio className="ml-[8px]">子对象</Radio>
      <Radio className="ml-[8px]">多个</Radio>
    </div>
    <div className="mt-[8px] h-[13px] w-[135px] text-right whitespace-nowrap shrink-0">选择了 5 个顶点</div>
    <Rollout className="mt-[27px]">软选择</Rollout>
    <Rollout className="mt-[4px]">编辑顶点</Rollout>
    <div className="mt-[7px] flex gap-[6px] pl-[1px] shrink-0">
      <Btn className="w-[66px] h-[16px]">移除</Btn>
      <Btn className="w-[67px] h-[16px]">断开</Btn>
    </div>
    <div className="mt-[4px] flex pl-[1px] shrink-0">
      <Btn className="w-[53px] h-[17px]">挤出</Btn>
      <WinBox />
      <Btn className="w-[53px] h-[17px] ml-[5px]">焊接</Btn>
      <WinBox />
    </div>
    <div className="mt-[5px] flex pl-[1px] shrink-0">
      <Btn className="w-[53px] h-[16px]">切角</Btn>
      <WinBox />
      <Btn className="w-[67px] h-[16px] ml-[5px]">目标焊接</Btn>
    </div>
    <Btn className="mt-[6px] ml-[36px] w-[67px] h-[15px] shrink-0">连接</Btn>
    <Btn className="mt-[6px] ml-[1px] w-[139px] h-[16px] shrink-0 !items-start pt-[2px]">权重和颜色</Btn>
    <div className="absolute left-[155px] top-[425px] w-[3px] h-[295px] bg-[#c8c8c8]" />
    <div className="absolute left-0 right-0 bottom-0 h-[6px] bg-[#444] border-t border-[#111]" />
  </div>
);

/* ---------- bottom status ---------- */
const Field = ({ children, className = "" }) => (
  <div className={`bg-[#3e3e3e] border border-[#2a2a2a] border-t-[#222] text-[#d8d8d8] flex items-center pl-[4px] whitespace-nowrap overflow-hidden shrink-0 ${className}`}>{children}</div>
);
const Coord = ({ l, v, w, m = "ml-[2px]" }) => (
  <>
    <span className={`${m} text-[#c8c8c8] text-[11px]`}>{l}</span>
    <div className={`ml-[2px] ${w} h-[18px] bg-[#555] border border-[#222] text-[#ddd] text-[10.500px] flex items-center pl-[2px] overflow-hidden whitespace-nowrap shrink-0`}>{v}</div>
    <Spin className="ml-[2px]" />
  </>
);
const P = ({ d, w = 17, h = 12, className = "" }) => (
  <Svg w={w} h={h} className={className}>
    <path d={d} fill="#ddd" stroke="#ddd" strokeWidth=".5" />
  </Svg>
);

const StatusBar = () => (
  <div className="h-[45px] flex pl-[8px] bg-[#444] text-[#d8d8d8] whitespace-nowrap">
    <div className="w-[90px] pt-[2px] flex flex-col gap-[2px]">
      <div className="h-[19px] bg-[#e0c4c4] border border-white" />
      <div className="h-[20px] bg-white" />
    </div>
    <div className="ml-[9px] w-[638px] pt-[2px] flex flex-col gap-[3px] border-l border-[#2a2a2a]">
      <div className="h-[19px] flex items-center">
        <Field className="w-[331px] h-[19px]">选择了 1 个 对象</Field>
        <Svg w={11} h={16} className="ml-[7px]"><path d="M5.500 16l-2-7a4.500 4.500 0 1 1 4 0z" fill="#e58a8a" stroke="#eee" /></Svg>
        <Svg w={11} h={14} className="ml-[15px]"><rect x="1" y="6" width="9" height="7" fill="#ddc05a" stroke="#eee" /><path d="M3 6V3a2.500 2.500 0 0 1 5 0v3" stroke="#eee" strokeWidth="1.500" /></Svg>
        <Svg w={13} h={13} className="ml-[14px]"><rect width="13" height="13" fill="#ddd" /><circle cx="6.500" cy="6.500" r="3" stroke="#222" strokeWidth="1.500" /><path d="M6.500 0v3M6.500 10v3M0 6.500h3M10 6.500h3" stroke="#222" /></Svg>
        <Coord l="X:" v="-29572.48" w="w-[54px]" m="ml-[5px]" />
        <Coord l="Y:" v="0.0mm" w="w-[53px]" />
        <Coord l="Z:" v="-8982.688" w="w-[52px]" />
      </div>
      <div className="h-[20px] flex items-center">
        <Field className="w-[613px] h-[19px]">单击或单击并拖动以选择对象</Field>
        <div className="ml-[3px] w-[20px] h-[20px] bg-[#3e85dc] border border-[#222] flex items-center justify-center">
          <span className="block w-[12px] h-[13px] border-2 border-white" />
        </div>
      </div>
    </div>
    <div className="ml-[3px] w-[92px] pt-[5px] flex flex-col gap-[4px]">
      <Field className="h-[18px]">栅格 = 100.0mm</Field>
      <Field className="h-[18px]">添加时间标记</Field>
    </div>
    <div className="ml-[3px] mt-[5px] w-[39px] h-[38px] border border-[#2a2a2a] border-t-[#555] flex items-center justify-center">
      <Svg w={24} h={12}><circle cx="5" cy="6" r="4" stroke="#bbb" strokeWidth="1.500" /><path d="M9 6h14M17 6v4M21 6v3" stroke="#bbb" strokeWidth="1.500" /></Svg>
    </div>
    <div className="ml-[4px] w-[61px] pt-[5px] flex flex-col gap-[4px]">
      <Btn className="h-[18px]">自动关键点</Btn>
      <Btn className="h-[18px]">设置关键点</Btn>
    </div>
    <div className="ml-[5px] w-[104px] pt-[5px] flex flex-col gap-[4px]">
      <Combo className="w-[104px] h-[18px]">选定对象</Combo>
      <div className="flex items-center h-[18px]">
        <Svg w={20} h={18} className="ml-[1px]"><path d="M2 16L8 2l5 14" stroke="#d33" /><path d="M6 16l5-14 4 10" stroke="#35a" /><path d="M15 17l3-3" stroke="#fff" strokeWidth="1.500" /></Svg>
        <Btn className="ml-[2px] w-[81px] h-[18px]">关键点过滤器...</Btn>
      </div>
    </div>
    <div className="ml-[12px] w-[198px] pt-[4px] flex flex-col gap-[3px]">
      <div className="h-[18px] flex items-center">
        <P d="M1 1v10M16 2l-6 4 6 4zM9 2L3 6l6 4z" />
        <P className="ml-[7px]" d="M1 6l5-4v8zM8 2h2v8H8zM12 2h2v8h-2z" />
        <P className="ml-[9px]" w={11} d="M1 1l9 5-9 5z" />
        <P className="ml-[9px]" d="M1 2h2v8H1zM5 2h2v8H5zM9 2l6 4-6 4z" />
        <P className="ml-[8px]" d="M16 1v10M1 2l6 4-6 4zM8 2l6 4-6 4z" />
        <Svg w={17} h={16} className="ml-[8px]"><circle cx="7" cy="10" r="4.500" stroke="#ddd" strokeWidth="1.600" /><path d="M11 13l3 3M11 1h5M13.500 0v4M11 6h5" stroke="#ddd" strokeWidth="1.200" /></Svg>
        <Svg w={14} h={14} className="ml-[6px]"><path d="M1 1h5v5H1zM8 1h5v5H8zM1 8h5v5H1z" fill="#ddd" /><circle cx="10" cy="10" r="3" stroke="#ddd" /></Svg>
        <Svg w={18} h={16} className="ml-[5px]"><rect x="5" y="4" width="8" height="8" fill="#5e9a5e" stroke="#ddd" /><path d="M1 5V1h4M13 1h4v4M1 11v4h4M17 11v4h-4" stroke="#ddd" /></Svg>
        <Svg w={16} h={16} className="ml-[4px]"><rect x="1" y="8" width="7" height="7" fill="#5e9a5e" stroke="#ddd" /><path d="M6 1h4v4H6zM11 1h4v4h-4zM10 6h5v4h-5z" fill="#ddd" /></Svg>
      </div>
      <div className="h-[18px] flex items-center">
        <P d="M1 1v10M16 1v10M3 6l5-4v8zM14 6L9 2v8z" />
        <div className="ml-[7px] w-[58px] h-[18px] bg-[#555] border border-[#222] pl-[2px] flex items-center text-[11px]">0</div>
        <Spin className="ml-[2px]" />
        <Svg w={16} h={16} className="ml-[6px]"><rect x="1" y="1" width="11" height="12" fill="#ddd" /><rect x="2" y="2" width="4" height="4" fill="#3568b8" /><circle cx="11" cy="12" r="3.500" fill="#eee" stroke="#333" /></Svg>
        <Svg w={16} h={16} className="ml-[2px]"><rect x="1" y="1" width="11" height="11" stroke="#ddd" strokeDasharray="2 1.500" /><circle cx="11" cy="11" r="3" fill="#ddd" /></Svg>
        <Svg w={15} h={16} className="ml-[5px]"><path d="M3 7l3 8h6l2-8-2 1V2l-2 0v5l-1-6H8v6L6 2H4v6z" fill="#eee" /></Svg>
        <Svg w={17} h={16} className="ml-[6px]"><path d="M8 2l5 11H2z" fill="#5e9a5e" stroke="#ddd" /><path d="M13 15l3-3" stroke="#fff" /></Svg>
        <Svg w={15} h={15} className="ml-[3px]"><rect x="1" y="1" width="12" height="12" fill="#ddd" /><path d="M3 3l8 7-4 0z" fill="#111" /></Svg>
      </div>
    </div>
  </div>
);

export default function App() {
  return (
    <div className="relative w-[1280px] h-[982px] overflow-hidden bg-black text-[11.200px] leading-none [font-family:'Liberation_Sans','Noto_Sans_CJK_SC',sans-serif]">
      <TitleBar />
      <div className="relative w-[1270px]">
        <MenuBar />
        <MainToolbar />
        <RibbonTabs />
        <Ribbon />
      </div>

      {/* application button sits over the title and menu bars */}
      <div className="absolute left-[7px] top-[8px] w-[37px] h-[38px] bg-[repeating-linear-gradient(45deg,#14695f_0px,#14695f_1px,#0e524b_1px,#0e524b_3px)] border border-[#222] flex items-center pl-[3px]">
        <Svg w={24} h={24}>
          <path d="M19 5C14 0 6 1 3 6c-3 6 0 13 6 15 5 1 10-1 12-5" stroke="#fff" strokeWidth="2.800" />
          <path d="M7 13c-1-5 9-7 10-2 1 4-6 4-6 0" stroke="#fff" strokeWidth="2.500" />
        </Svg>
        <span className="ml-[2px] w-0 h-0 border-x-[4px] border-x-transparent border-t-[4px] border-t-black" />
      </div>

      <div className="flex w-[1270px] h-[733px]">
        {/* left strip */}
        <div className="w-[44px] shrink-0 bg-[#444] border-l-[6px] border-black flex flex-col items-center">
          <div className="mt-[661px] w-[18px] h-[18px] bg-[#555] border border-[#2a2a2a] rounded-[2px] flex items-center justify-center">
            <span className="w-0 h-0 border-y-[5px] border-y-transparent border-l-[6px] border-l-[#ddd]" />
          </div>
          <div className="mt-[10px] w-[34px] h-[40px] ml-[6px] bg-[#3e7fcc] rounded-l-[4px] flex items-center justify-center">
            <span className="block w-[27px] h-[27px] bg-[#5a6470] border border-[#222]" />
          </div>
        </div>
        {/* viewport column */}
        <div className="w-[1064px] shrink-0 bg-[#444] flex flex-col">
          <div className="h-[688px] w-[1055px] bg-linear-to-b from-[#222] to-[#4d4d4d] border border-[#8a6d20] relative">
            <span className="absolute left-[5px] top-[5px] text-[#ddd] text-[11px] tracking-[1px]">[ + ▯ 前 ▯ 线框 ]</span>
            <Mesh />
          </div>
          <div className="h-[17px] flex items-center">
            <Btn className="w-[16px] h-[17px]">&lt;</Btn>
            <Btn className="w-[115px] h-[17px] text-[11px]">0 / 100</Btn>
            <Btn className="w-[16px] h-[17px]">&gt;</Btn>
          </div>
          <div className="h-[28px] flex w-[1056px] items-end">
            <div className="w-[46px] h-[27px] bg-[#3c3c3c] flex items-center justify-center">
              <Svg w={18} h={18}><rect x="1" y="1" width="16" height="5" stroke="#ddd" /><path d="M1 15h16M5 8v5M13 8v5M1 17h16" stroke="#ddd" /></Svg>
            </div>
            <Ruler />
          </div>
        </div>
        <CommandPanel />
      </div>

      <StatusBar />
      <div className="h-[2px] bg-[#ddd] opacity-60" />

      {/* window frame on the right */}
      <div className="absolute left-[1270px] top-[30px] bottom-0 w-[10px] bg-linear-to-r from-black to-[#2a3a55]" />
      <div className="absolute left-[12px] top-[979px] w-[24px] h-[6px] rounded-t-full bg-[#8fa8c0]" />

      <LeftMenu />
      <RightMenu />
      {/* red callout */}
      <div className="absolute left-[756px] top-[477px] w-[98px] h-[45px] border-[6px] border-[#f23030]" />
    </div>
  );
}
